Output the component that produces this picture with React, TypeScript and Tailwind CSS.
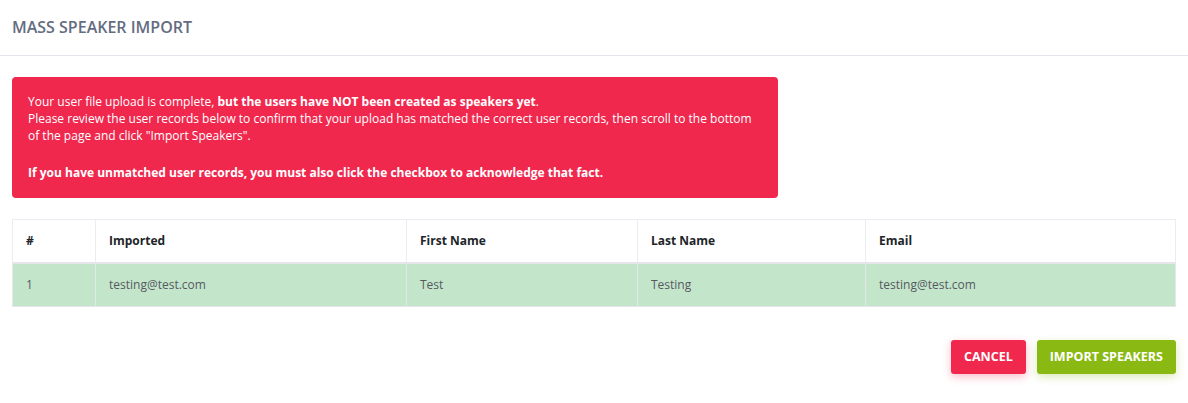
export default function App() {
  return (
    <div className="min-h-screen bg-white text-[13px] text-[#575962]" style={{ fontFamily: '"Open Sans", "Liberation Sans", sans-serif' }}>
      {/* Header */}
      <div className="h-[56px] flex items-center px-[12px] border-b border-[#e2e5ec]">
        <h3 className="text-[16px] font-semibold text-[#646c7f] -mt-[2px]">MASS SPEAKER IMPORT</h3>
      </div>

      <div className="px-[12px] pt-[21px]">
        {/* Alert */}
        <div className="w-[766px] rounded-[4px] bg-[#f0284e] text-white text-[12px] leading-[17px] pl-[16px] pr-[16px] pt-[16px] pb-[17px]">
          <p>
            Your user file upload is complete, <b>but the users have NOT been created as speakers yet</b>.
            <br />
            Please review the user records below to confirm that your upload has matched the correct user records, then scroll to the bottom of the page and click "Import Speakers".
          </p>
          <p className="mt-[20px] font-bold">If you have unmatched user records, you must also click the checkbox to acknowledge that fact.</p>
        </div>

        {/* Table */}
        <table className="mt-[21px] w-full border-collapse text-[12px]">
          <thead>
            <tr className="h-[43px] text-left text-[#212529]">
              <th className="w-[83px] border border-[#ebedf2] border-b-2 border-b-[#e4e6ea] pl-[13px] font-bold">#</th>
              <th className="w-[311px] border border-[#ebedf2] border-b-2 border-b-[#e4e6ea] pl-[13px] font-bold">Imported</th>
              <th className="w-[231px] border border-[#ebedf2] border-b-2 border-b-[#e4e6ea] pl-[13px] font-bold">First Name</th>
              <th className="w-[228px] border border-[#ebedf2] border-b-2 border-b-[#e4e6ea] pl-[13px] font-bold">Last Name</th>
              <th className="border border-[#ebedf2] border-b-2 border-b-[#e4e6ea] pl-[13px] font-bold">Email</th>
            </tr>
          </thead>
          <tbody>
            <tr className="h-[44px] bg-[#c3e6cb] text-[#575962]">
              <td className="border border-[#e4e6ea] pl-[13px]">1</td>
              <td className="border border-[#e4e6ea] pl-[13px]">testing@test.com</td>
              <td className="border border-[#e4e6ea] pl-[13px]">Test</td>
              <td className="border border-[#e4e6ea] pl-[13px]">Testing</td>
              <td className="border border-[#e4e6ea] pl-[13px]">testing@test.com</td>
            </tr>
          </tbody>
        </table>

        {/* Actions */}
        <div className="mt-[33px] flex justify-end gap-[11px]">
          <button className="h-[34px] px-[13px] rounded-[3px] bg-[#f0284e] text-white text-[12.5px] font-bold shadow-[0_3px_8px_rgba(240,40,78,0.3)]">CANCEL</button>
          <button className="h-[34px] px-[13px] rounded-[3px] bg-[#8ab914] text-white text-[12.5px] font-bold shadow-[0_3px_8px_rgba(138,185,20,0.3)]">IMPORT SPEAKERS</button>
        </div>
      </div>
    </div>
  )
}
